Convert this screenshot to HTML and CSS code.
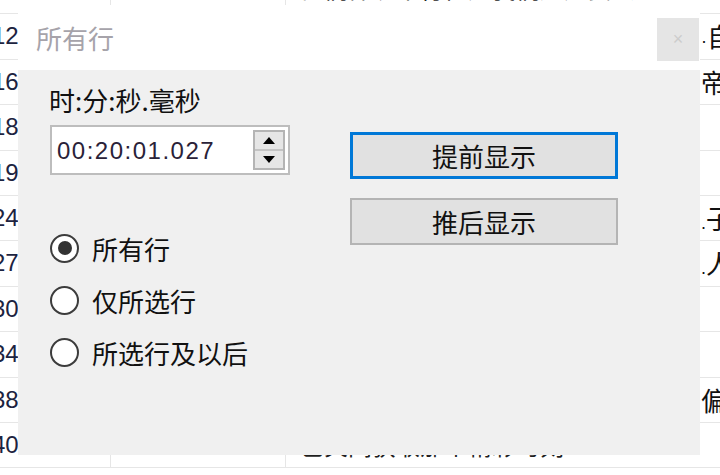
FILE: index.html
```html
<!DOCTYPE html>
<html lang="zh-CN">
<head>
    <meta charset="UTF-8">
    <title>所有行</title>
    <link rel="stylesheet" href="styles.css">
</head>
<body>
    <!-- Subtitle list behind the dialog -->
    <div class="grid">
        <div class="row"><div class="c1">08.311</div><div class="c2">1:254</div><div class="c3">他们都说不行但是我们还是要去</div><div class="c4"></div></div>
        <div class="row"><div class="c1">12.120</div><div class="c2">1:180</div><div class="c3">我们一起去看看吧</div><div class="c4"><span class="pt">·</span>自</div></div>
        <div class="row"><div class="c1">16.480</div><div class="c2">2:040</div><div class="c3">这里什么都没有</div><div class="c4">帝</div></div>
        <div class="row"><div class="c1">18.027</div><div class="c2">1:020</div><div class="c3">是吗</div><div class="c4"></div></div>
        <div class="row"><div class="c1">19.640</div><div class="c2">3:100</div><div class="c3">你再好好找一找</div><div class="c4"></div></div>
        <div class="row"><div class="c1">24.300</div><div class="c2">2:260</div><div class="c3">好吧我知道了</div><div class="c4"><span class="pt">.</span>子</div></div>
        <div class="row"><div class="c1">27.150</div><div class="c2">2:480</div><div class="c3">那个人是谁</div><div class="c4"><span class="pt">.</span>人</div></div>
        <div class="row"><div class="c1">30.900</div><div class="c2">3:010</div><div class="c3">不认识</div><div class="c4"></div></div>
        <div class="row"><div class="c1">34.210</div><div class="c2">3:600</div><div class="c3">我们走吧</div><div class="c4"></div></div>
        <div class="row"><div class="c1">38.440</div><div class="c2">1:900</div><div class="c3">等一下</div><div class="c4">偏</div></div>
        <div class="row"><div class="c1">40.127</div><div class="c2">1:254</div><div class="c3">已关闭获取那个精彩时刻</div><div class="c4"></div></div>
    </div>

    <!-- Shift dialog -->
    <div class="dialog">
        <div class="titlebar">
            <span class="title">所有行</span>
            <span class="close">×</span>
        </div>
        <div class="dialog-body">
            <div class="left">
                <div class="label">时:分:秒.毫秒</div>
                <div class="spinner">
                    <span class="spinner-value">00:20:01.027</span>
                    <div class="spin-buttons">
                        <span class="spin-btn"><svg width="12" height="7" viewBox="0 0 12 7"><path d="M6 0 L12 7 L0 7 Z" fill="#000"/></svg></span>
                        <span class="spin-btn"><svg width="12" height="7" viewBox="0 0 12 7"><path d="M0 0 L12 0 L6 7 Z" fill="#000"/></svg></span>
                    </div>
                </div>
                <div class="radios">
                    <label class="radio"><span class="dot checked"></span>所有行</label>
                    <label class="radio"><span class="dot"></span>仅所选行</label>
                    <label class="radio"><span class="dot"></span>所选行及以后</label>
                </div>
            </div>
            <div class="right">
                <button class="btn focused">提前显示</button>
                <button class="btn">推后显示</button>
            </div>
        </div>
    </div>
</body>
</html>
```

FILE: styles.css
```css
/* Base */
* {
    margin: 0;
    padding: 0;
    box-sizing: border-box;
}

body {
    font-family: 'Liberation Sans', 'Noto Sans CJK SC', sans-serif;
    background-color: #ffffff;
    color: #1e1e1e;
    width: 720px;
    height: 475px;
    overflow: hidden;
    position: relative;
}

/* Background grid */
.grid {
    margin-top: -31px;
    margin-left: -8px;
}

.row {
    display: flex;
    height: 45.4px;
    border-bottom: 1px solid #e6e6e6;
    font-size: 24px;
    line-height: 44px;
    white-space: nowrap;
}

.row:first-child {
    line-height: 38px;
}

.row > div {
    overflow: hidden;
}

.c1 {
    width: 118px;
    color: #1c2340;
}

.c2 {
    width: 175px;
    padding-left: 12px;
    border-left: 1px solid #e6e6e6;
    color: #3a2a10;
}

.c3 {
    width: 415px;
    padding-left: 14px;
    border-left: 1px solid #e6e6e6;
    font-family: 'Noto Sans CJK SC', sans-serif;
}

.c4 {
    flex: 1;
    padding-left: 1px;
    font-family: 'Noto Sans CJK SC', sans-serif;
    font-size: 26px;
    color: #111111;
}

.pt {
    font-family: 'Liberation Sans', sans-serif;
    font-size: 18px;
}

/* Dialog */
.dialog {
    position: absolute;
    left: 18px;
    top: 5px;
    width: 682px;
    height: 450px;
    display: flex;
    flex-direction: column;
    font-family: 'Noto Sans CJK SC', sans-serif;
}

.titlebar {
    height: 65px;
    background-color: #ffffff;
    display: flex;
    justify-content: space-between;
    align-items: center;
    padding-left: 18px;
}

.title {
    font-size: 26px;
    line-height: 30px;
    color: #a6a3aa;
}

.close {
    align-self: flex-start;
    margin-top: 13px;
    margin-right: 1px;
    width: 42px;
    height: 43px;
    background-color: #e5e5e5;
    color: #cccccc;
    font-family: 'Liberation Sans', sans-serif;
    font-size: 18px;
    line-height: 43px;
    text-align: center;
}

.dialog-body {
    flex: 1;
    background-color: #f0f0f0;
    display: flex;
    gap: 60px;
    padding: 15px 0 0 31px;
}

.left {
    width: 241px;
}

.label {
    font-size: 26px;
    line-height: 30px;
    color: #111111;
}

/* Spin box */
.spinner {
    margin-top: 10px;
    margin-left: 1px;
    width: 240px;
    height: 50px;
    background-color: #ffffff;
    border: 2px solid #bdbdbd;
    display: flex;
    align-items: center;
    justify-content: space-between;
    padding: 0 3px 0 5px;
}

.spinner-value {
    font-family: 'Liberation Sans', sans-serif;
    font-size: 24px;
    letter-spacing: 1.5px;
    color: #2a2238;
    padding-top: 2px;
}

.spin-buttons {
    display: flex;
    flex-direction: column;
    width: 32px;
    height: 40px;
    border: 2px solid #b4b4b4;
    background-color: #e6e6e6;
}

.spin-btn {
    flex: 1;
    display: flex;
    align-items: center;
    justify-content: center;
}

.spin-btn + .spin-btn {
    border-top: 2px solid #c4c4c4;
}

/* Radio group */
.radios {
    margin-top: 47px;
    margin-left: 1px;
}

.radio {
    display: flex;
    align-items: center;
    gap: 13px;
    height: 52px;
    font-size: 26px;
    color: #111111;
}

.dot {
    width: 29px;
    height: 29px;
    border-radius: 50%;
    border: 2px solid #3c3c3c;
    background-color: #ffffff;
    display: flex;
    align-items: center;
    justify-content: center;
}

.dot.checked::after {
    content: "";
    width: 14px;
    height: 14px;
    border-radius: 50%;
    background-color: #333333;
}

/* Buttons */
.right {
    display: flex;
    flex-direction: column;
    gap: 19px;
    margin-top: 47px;
}

.btn {
    width: 268px;
    height: 47px;
    background-color: #e1e1e1;
    border: 2px solid #b4b4b4;
    font-family: 'Noto Sans CJK SC', sans-serif;
    font-size: 26px;
    line-height: 40px;
    color: #111111;
}

.btn.focused {
    border: 3px solid #0078d7;
}
```
